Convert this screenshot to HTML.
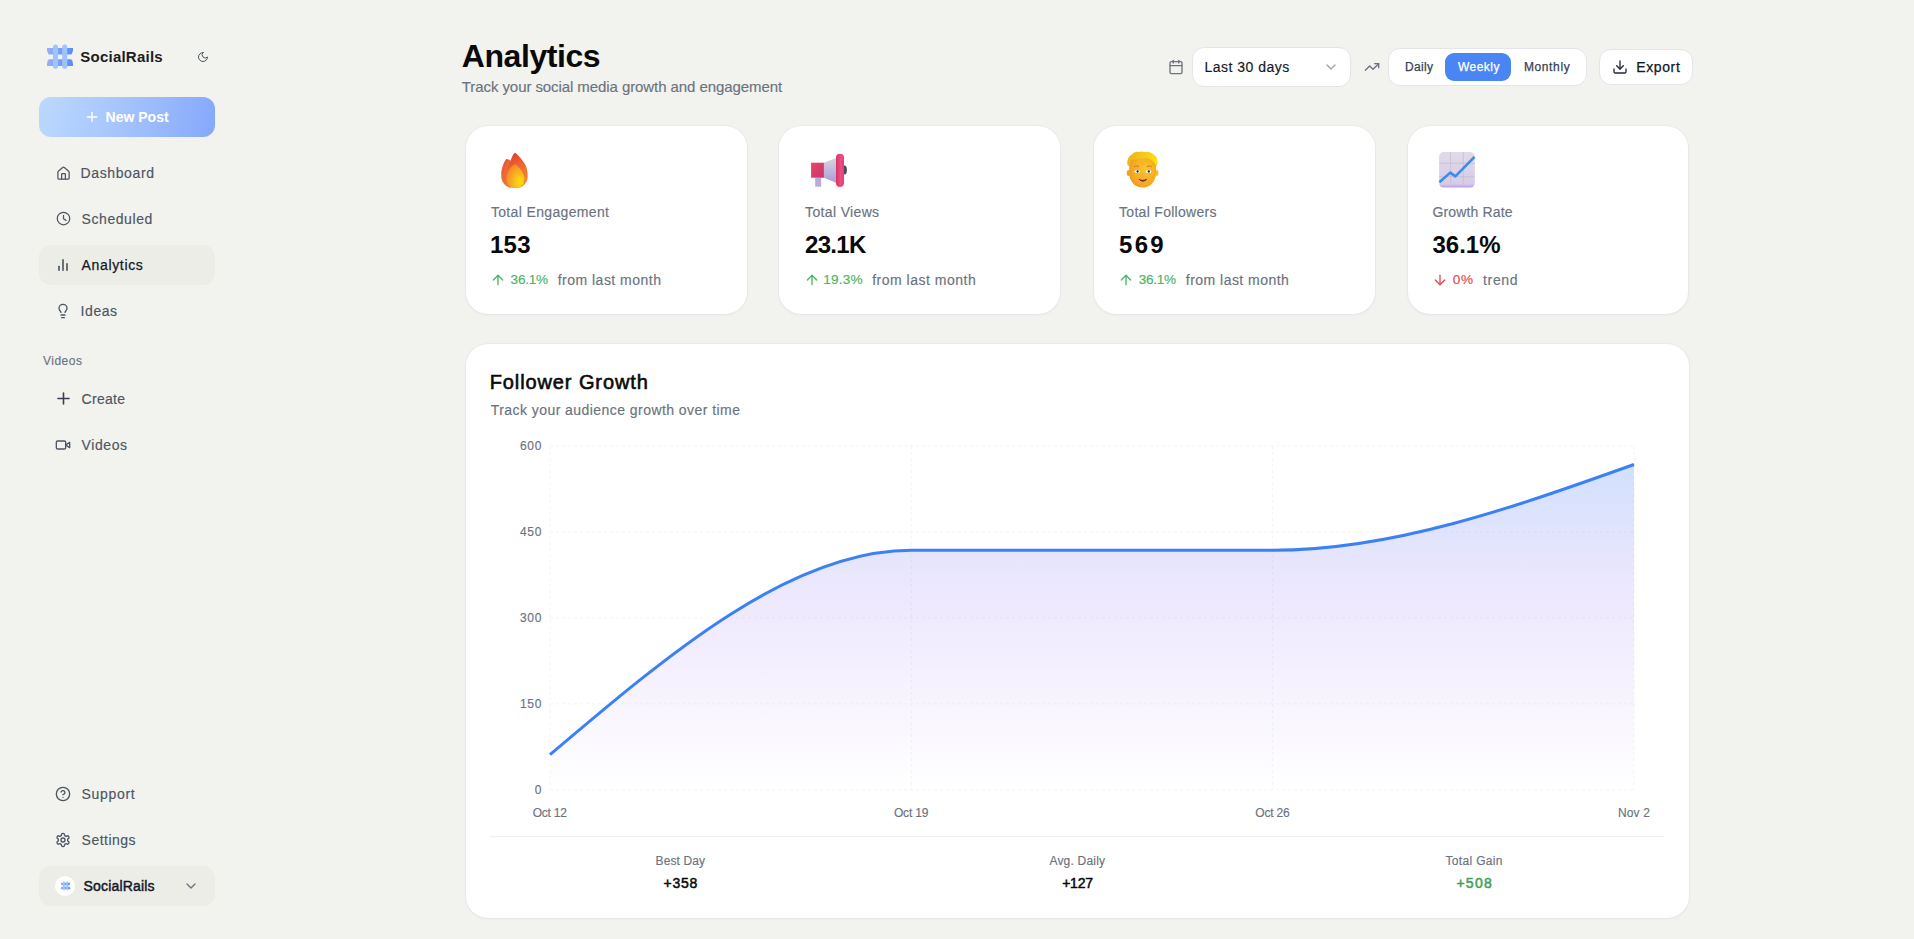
<!DOCTYPE html>
<html><head><meta charset="utf-8">
<style>
*{margin:0;padding:0;box-sizing:border-box}
html,body{width:1914px;height:939px;overflow:hidden}
body{background:#f2f2ee;position:relative;font-family:"Liberation Sans",sans-serif}
.t{position:absolute;white-space:nowrap;line-height:1}
.ic{position:absolute;fill:none;stroke:currentColor;stroke-width:2;stroke-linecap:round;stroke-linejoin:round}
.box{position:absolute}
.card{position:absolute;background:#fff;border-radius:22px;box-shadow:0 0 0 1px rgba(215,220,235,0.28),0 1px 3px rgba(60,70,110,0.05)}
.ctl{position:absolute;background:#fff;border:1px solid #e3e5ea;border-radius:12px}
</style></head>
<body>
<!-- ===== SIDEBAR ===== -->
<svg class="box" style="left:45px;top:43px" width="30" height="28" viewBox="0 0 30 28">
  <defs>
    <linearGradient id="lgb" x1="0" y1="0" x2="1" y2="0">
      <stop offset="0" stop-color="#98b0f4"/><stop offset="1" stop-color="#5a8cf7"/>
    </linearGradient>
  </defs>
  <path d="M2 4.9H28V7.2L27 10.5L26 11.6H4L3 10.5L2 7.2Z" fill="url(#lgb)"/>
  <path d="M2 22.9H28V20.6L27 17.3L26 16.2H4L3 17.3L2 20.6Z" fill="url(#lgb)"/>
  <rect x="8" y="1.6" width="5" height="24.2" rx="2.5" fill="#9dc4ff"/>
  <rect x="17.2" y="1.6" width="5" height="24.2" rx="2.5" fill="#9dc4ff"/>
</svg>
<svg class="ic" style="left:196.8px;top:51px;color:#4b5563" width="12" height="12" viewBox="0 0 24 24"><path d="M12 3a6 6 0 0 0 9 9 9 9 0 1 1-9-9Z"/></svg>

<div class="box" style="left:39px;top:97px;width:176px;height:40px;border-radius:12px;background:linear-gradient(100deg,#bbd9fe 0%,#a6c5fd 45%,#86a8fa 100%)"></div>
<svg class="ic" style="left:84px;top:109.3px;color:#fff" width="16" height="16" viewBox="0 0 24 24"><path d="M5 12h14"/><path d="M12 5v14"/></svg>

<div class="box" style="left:39px;top:245px;width:176px;height:40px;border-radius:12px;background:#ededE8"></div>

<svg class="ic" style="left:55.6px;top:165.6px;color:#4b5563" width="15" height="15" viewBox="0 0 24 24"><path d="M15 21v-8a1 1 0 0 0-1-1h-4a1 1 0 0 0-1 1v8"/><path d="M3 10a2 2 0 0 1 .709-1.528l7-5.999a2 2 0 0 1 2.582 0l7 5.999A2 2 0 0 1 21 10v9a2 2 0 0 1-2 2H5a2 2 0 0 1-2-2z"/></svg>
<svg class="ic" style="left:55.5px;top:211.4px;color:#4b5563" width="15" height="15" viewBox="0 0 24 24"><circle cx="12" cy="12" r="10"/><polyline points="12 7 12 12.5 16 15"/></svg>
<svg class="ic" style="left:55px;top:257px;color:#2b3340" width="16" height="16" viewBox="0 0 24 24"><line x1="18" x2="18" y1="20" y2="10"/><line x1="12" x2="12" y1="20" y2="4"/><line x1="6" x2="6" y1="20" y2="14"/></svg>
<svg class="ic" style="left:55px;top:303px;color:#4b5563" width="16" height="16" viewBox="0 0 24 24"><path d="M15 14c.2-1 .7-1.7 1.5-2.5 1-.9 1.5-2.2 1.5-3.5A6 6 0 0 0 6 8c0 1 .2 2.2 1.5 3.5.7.7 1.3 1.5 1.5 2.5"/><path d="M9 18h6"/><path d="M10 22h4"/></svg>
<svg class="ic" style="left:53.5px;top:389.3px;color:#374151" width="19" height="19" viewBox="0 0 24 24"><path d="M5 12h14"/><path d="M12 5v14"/></svg>
<svg class="ic" style="left:55px;top:437px;color:#4b5563" width="16" height="16" viewBox="0 0 24 24"><path d="m22 8-6 4 6 4V8Z"/><rect width="14" height="12" x="2" y="6" rx="2" ry="2"/></svg>
<svg class="ic" style="left:55px;top:786px;color:#4b5563" width="16" height="16" viewBox="0 0 24 24"><circle cx="12" cy="12" r="10"/><path d="M9.09 9a3 3 0 0 1 5.83 1c0 2-3 3-3 3"/><path d="M12 17h.01"/></svg>
<svg class="ic" style="left:55px;top:832px;color:#4b5563" width="16" height="16" viewBox="0 0 24 24"><path d="M12.22 2h-.44a2 2 0 0 0-2 2v.18a2 2 0 0 1-1 1.730l-.43.25a2 2 0 0 1-2 0l-.15-.08a2 2 0 0 0-2.730.73l-.22.38a2 2 0 0 0 .73 2.730l.15.1a2 2 0 0 1 1 1.720v.51a2 2 0 0 1-1 1.740l-.15.09a2 2 0 0 0-.73 2.730l.22.38a2 2 0 0 0 2.730.73l.15-.08a2 2 0 0 1 2 0l.43.25a2 2 0 0 1 1 1.730V20a2 2 0 0 0 2 2h.44a2 2 0 0 0 2-2v-.18a2 2 0 0 1 1-1.730l.43-.25a2 2 0 0 1 2 0l.15.08a2 2 0 0 0 2.730-.73l.22-.39a2 2 0 0 0-.73-2.730l-.15-.08a2 2 0 0 1-1-1.740v-.5a2 2 0 0 1 1-1.740l.15-.09a2 2 0 0 0 .73-2.730l-.22-.38a2 2 0 0 0-2.730-.73l-.15.08a2 2 0 0 1-2 0l-.43-.25a2 2 0 0 1-1-1.730V4a2 2 0 0 0-2-2z"/><circle cx="12" cy="12" r="3"/></svg>

<div class="box" style="left:39px;top:866px;width:176px;height:40px;border-radius:12px;background:#ededE8"></div>
<div class="box" style="left:55px;top:876px;width:20px;height:20px;border-radius:10px;background:#fff"></div>
<svg class="box" style="left:59.5px;top:881px" width="11" height="10" viewBox="0 0 30 28">
  <path d="M2 4.9H28V7.2L27 10.5L26 11.6H4L3 10.5L2 7.2Z" fill="url(#lgb)"/>
  <path d="M2 22.9H28V20.6L27 17.3L26 16.2H4L3 17.3L2 20.6Z" fill="url(#lgb)"/>
  <rect x="8" y="1.6" width="5" height="24.2" rx="2.5" fill="#9dc4ff"/>
  <rect x="17.2" y="1.6" width="5" height="24.2" rx="2.5" fill="#9dc4ff"/>
</svg>
<svg class="ic" style="left:183px;top:878px;color:#6b7280" width="16" height="16" viewBox="0 0 24 24"><path d="m6 9 6 6 6-6"/></svg>

<!-- ===== HEADER CONTROLS ===== -->
<svg class="ic" style="left:1168px;top:58.8px;color:#6b7280" width="16" height="16" viewBox="0 0 24 24"><rect width="18" height="18" x="3" y="4" rx="2" ry="2"/><line x1="16" x2="16" y1="2" y2="6"/><line x1="8" x2="8" y1="2" y2="6"/><line x1="3" x2="21" y1="10" y2="10"/></svg>
<div class="ctl" style="left:1192px;top:47px;width:159px;height:39.5px"></div>
<svg class="ic" style="left:1323px;top:59px;color:#9ca3af" width="16" height="16" viewBox="0 0 24 24"><path d="m6 9 6 6 6-6"/></svg>
<svg class="ic" style="left:1364px;top:58.8px;color:#6b7280" width="16" height="16" viewBox="0 0 24 24"><polyline points="22 7 13.5 15.5 8.5 10.5 2 17"/><polyline points="16 7 22 7 22 13"/></svg>
<div class="ctl" style="left:1388px;top:48px;width:198.5px;height:37.5px"></div>
<div class="box" style="left:1445px;top:53px;width:66px;height:28px;border-radius:9px;background:#4a85f4"></div>
<div class="ctl" style="left:1599px;top:49px;width:93.5px;height:35.5px"></div>
<svg class="ic" style="left:1611.8px;top:58.6px;color:#1f2937" width="16" height="16" viewBox="0 0 24 24"><path d="M21 15v4a2 2 0 0 1-2 2H5a2 2 0 0 1-2-2v-4"/><polyline points="7 10 12 15 17 10"/><line x1="12" x2="12" y1="15" y2="3"/></svg>

<!-- ===== STAT CARDS ===== -->
<div class="card" style="left:465.5px;top:125.6px;width:281.1px;height:188.3px"></div>
<div class="card" style="left:779px;top:125.6px;width:281.1px;height:188.3px"></div>
<div class="card" style="left:1093.6px;top:125.6px;width:281.1px;height:188.3px"></div>
<div class="card" style="left:1407.6px;top:125.6px;width:280.7px;height:188.3px"></div>

<!-- fire emoji -->
<svg class="box" style="left:494px;top:146px" width="40" height="48" viewBox="0 0 40 48">
  <defs>
    <linearGradient id="fo" x1="0.3" y1="0" x2="0.6" y2="1"><stop offset="0" stop-color="#e3392f"/><stop offset="0.4" stop-color="#ee6530"/><stop offset="1" stop-color="#f58e2b"/></linearGradient>
    <linearGradient id="fl" x1="0" y1="0" x2="0.3" y2="1"><stop offset="0" stop-color="#e5503a"/><stop offset="1" stop-color="#ef7a34"/></linearGradient>
    <radialGradient id="fy" cx="0.75" cy="0.75" r="0.8"><stop offset="0" stop-color="#ffe100"/><stop offset="0.4" stop-color="#fbbb1e"/><stop offset="1" stop-color="#f2872c"/></radialGradient>
  </defs>
  <path d="M12.3 13C13.2 12.6 14.6 13.3 15.5 15C13.5 18 12 23 12 29C12 35 14 39.5 18 42C12.5 41.5 8 37.5 7.3 31C6.8 24.5 9 17 12.3 13Z" fill="url(#fl)"/>
  <path d="M14.6 13.6C15.6 13.4 16.4 14.3 16.8 15.5C15 19 14 24 14.2 29.5C14.4 35 16.5 39.5 20 42C15 41.5 10.5 38 9.8 31.5C9.2 25 11.2 18 14.6 13.6Z" fill="#ea6a36"/>
  <path d="M21 6.6C24.5 9.5 29 14.5 31.7 19.4C33.3 23 33.8 27 33.7 30.7C33.5 36.5 29.5 42 22 42C16 42 12.2 37.5 12.2 31C12.2 24 14.5 18.5 16.4 15C17.6 11.5 19.2 8.5 21 6.6Z" fill="url(#fo)"/>
  <path d="M21 17.9C24 20 28.5 24.5 29.9 29.5C30.8 33 30.3 36.8 28.6 38.9C27 40.9 24.5 41.9 21.5 41.9C18 41.9 15 40.8 13.6 38.5C12.2 36 12 32 12.8 28.5C14 23.5 17.5 20 21 17.9Z" fill="url(#fy)"/>
</svg>
<!-- megaphone emoji -->
<svg class="box" style="left:790px;top:140px" width="80" height="60" viewBox="0 0 80 60">
  <defs>
    <linearGradient id="mr" x1="0" y1="0" x2="1" y2="1"><stop offset="0" stop-color="#ea4663"/><stop offset="1" stop-color="#c9336c"/></linearGradient>
    <linearGradient id="mc" x1="0" y1="0" x2="0" y2="1"><stop offset="0" stop-color="#d8d4de"/><stop offset="1" stop-color="#a99cd6"/></linearGradient>
    <linearGradient id="mb" x1="0" y1="0" x2="1" y2="0"><stop offset="0" stop-color="#d23464"/><stop offset="0.6" stop-color="#f04c82"/><stop offset="1" stop-color="#e0407a"/></linearGradient>
  </defs>
  <rect x="25.2" y="37.7" width="5.9" height="9" fill="#b8aadb"/>
  <path d="M33.9 22.7L46 17.9V42.8L33.9 37.7Z" fill="url(#mc)"/>
  <rect x="21.1" y="22.7" width="12.8" height="15" fill="url(#mr)"/>
  <ellipse cx="54.5" cy="30" rx="2.4" ry="4.5" fill="#4a4a5c"/>
  <rect x="46" y="13.7" width="8" height="33.3" rx="4" fill="url(#mb)"/>
</svg>
<!-- person emoji -->
<svg class="box" style="left:1110px;top:140px" width="60" height="60" viewBox="0 0 60 60">
  <defs>
    <radialGradient id="pf" cx="0.6" cy="0.45" r="0.7"><stop offset="0" stop-color="#f9c62c"/><stop offset="0.7" stop-color="#f4a81e"/><stop offset="1" stop-color="#ee8f30"/></radialGradient>
    <linearGradient id="ph" x1="0" y1="0.3" x2="1" y2="0.5"><stop offset="0" stop-color="#f1ae1c"/><stop offset="0.5" stop-color="#f6c81a"/><stop offset="1" stop-color="#fde40c"/></linearGradient>
  </defs>
  <ellipse cx="18.6" cy="33" rx="1.9" ry="3" fill="#f2a61e"/>
  <ellipse cx="46.6" cy="33" rx="1.9" ry="3" fill="#f6c02a"/>
  <path d="M19.2 24C19.2 17.5 25 14.5 32.6 14.5C40.2 14.5 46 17.5 46 24V33C46 41.5 40.2 47.6 32.6 47.6C25 47.6 19.2 41.5 19.2 33Z" fill="url(#pf)"/>
  <path d="M17.5 25C16.8 20 18.5 16 22 14.5C23.5 12.5 26 11.5 28.5 12C30 11.2 33 11.2 35 12C37 11.3 40 11.8 42 13.5C45.5 15 48 18.5 47.8 22.5C47.6 24 47.2 25 46.3 26.5C45 22 41.5 18.8 36.5 17.8C34.8 17.5 33.6 17.8 33.2 18.6C30 19.2 24 18.8 21.2 19.8C20.2 21.5 19.6 23.5 19.2 26.5Z" fill="url(#ph)"/>
  <path d="M24.4 26.6C25.5 25.7 27.5 25.7 28.6 26.5M37.2 26.5C38.3 25.7 40.3 25.7 41.4 26.6" stroke="#c8703c" stroke-width="1" fill="none" stroke-linecap="round"/>
  <ellipse cx="27.2" cy="31.4" rx="2.9" ry="1.5" fill="#fff"/>
  <ellipse cx="38.5" cy="31.4" rx="2.9" ry="1.5" fill="#fff"/>
  <circle cx="27.6" cy="31.5" r="1.15" fill="#2a1e2a"/>
  <circle cx="38.8" cy="31.5" r="1.15" fill="#2a1e2a"/>
  <path d="M33 33C32.6 35 32.3 36 32.8 37" stroke="#e8961c" stroke-width="0.8" fill="none" opacity="0.6"/>
  <path d="M29.2 39.2C31 40.7 34.5 40.7 36.6 39.2C35.2 41.8 30.6 41.8 29.2 39.2Z" fill="#7a1f5c" stroke="#7a1f5c" stroke-width="0.8"/>
</svg>
<!-- chart emoji -->
<svg class="box" style="left:1425px;top:140px" width="60" height="60" viewBox="0 0 60 60">
  <defs>
    <linearGradient id="cg" x1="0" y1="0" x2="0" y2="1"><stop offset="0" stop-color="#e0dbe8"/><stop offset="0.9" stop-color="#d6cce8"/><stop offset="1" stop-color="#b99ae0"/></linearGradient>
  </defs>
  <rect x="14.1" y="12.1" width="35.7" height="35.5" rx="4.5" fill="url(#cg)"/>
  <path d="M25.6 12.3V47.4M38.3 12.3V47.4M14.2 23.3H49.7M14.2 36.7H49.7" stroke="#c5bdd0" stroke-width="0.8"/>
  <path d="M14.4 42.2L25.2 32.6L30.4 36.4L49.5 16.9" stroke="#3b8ee8" stroke-width="2.6" fill="none" stroke-linejoin="round"/>
</svg>

<!-- trend arrows -->
<svg class="ic" style="left:490px;top:272px;color:#4bb567" width="16" height="16" viewBox="0 0 24 24"><path d="m5 12 7-7 7 7"/><path d="M12 19V5"/></svg>
<svg class="ic" style="left:804px;top:272px;color:#4bb567" width="16" height="16" viewBox="0 0 24 24"><path d="m5 12 7-7 7 7"/><path d="M12 19V5"/></svg>
<svg class="ic" style="left:1117.9px;top:272px;color:#4bb567" width="16" height="16" viewBox="0 0 24 24"><path d="m5 12 7-7 7 7"/><path d="M12 19V5"/></svg>
<svg class="ic" style="left:1431.9px;top:272px;color:#e5484d" width="16" height="16" viewBox="0 0 24 24"><path d="M12 5v14"/><path d="m19 12-7 7-7-7"/></svg>

<!-- ===== CHART CARD ===== -->
<div class="card" style="left:465.5px;top:344px;width:1223px;height:574px"></div>
<svg class="box" style="left:0;top:0" width="1914" height="939">
  <defs>
    <linearGradient id="ag" x1="0" y1="0" x2="0" y2="1">
      <stop offset="0" stop-color="#3b82f6" stop-opacity="0.24"/>
      <stop offset="0.45" stop-color="#8b5cf6" stop-opacity="0.135"/>
      <stop offset="1" stop-color="#8b5cf6" stop-opacity="0"/>
    </linearGradient>
  </defs>
  <g stroke="#f4f4f6" stroke-width="1" stroke-dasharray="3 3" fill="none">
    <path d="M550 446.00H1634M550 531.95H1634M550 617.90H1634M550 703.85H1634M550 789.80H1634"/>
    <path d="M550 446V789.8M911.33 446V789.8M1272.67 446V789.8M1634 446V789.8"/>
  </g>
  <path d="M550,754.70C670.44,652.50,790.89,550.30,911.33,550.30C1031.78,550.30,1152.22,550.30,1272.67,550.30C1393.11,550.30,1513.56,507.40,1634,464.50L1634,789.8L550,789.8Z" fill="url(#ag)"/>
  <path d="M550,754.70C670.44,652.50,790.89,550.30,911.33,550.30C1031.78,550.30,1152.22,550.30,1272.67,550.30C1393.11,550.30,1513.56,507.40,1634,464.50" fill="none" stroke="#3b80f5" stroke-width="3"/>
  <line x1="490" y1="836.6" x2="1664" y2="836.6" stroke="#efefef" stroke-width="1"/>
</svg>

<div class="t" style="left:80.30px;top:49.10px;font-size:15px;color:#1c1c1c;font-weight:bold;letter-spacing:0.230px;">SocialRails</div>
<div class="t" style="left:105.60px;top:110.15px;font-size:14px;color:#ffffff;font-weight:bold;">New Post</div>
<div class="t" style="left:80.60px;top:165.95px;font-size:14px;color:#4b5563;letter-spacing:0.612px;-webkit-text-stroke:0.15px #4b5563;">Dashboard</div>
<div class="t" style="left:81.60px;top:211.95px;font-size:14px;color:#4b5563;letter-spacing:0.565px;-webkit-text-stroke:0.15px #4b5563;">Scheduled</div>
<div class="t" style="left:80.60px;top:303.95px;font-size:14px;color:#4b5563;letter-spacing:0.563px;-webkit-text-stroke:0.15px #4b5563;">Ideas</div>
<div class="t" style="left:81.60px;top:391.95px;font-size:14px;color:#4b5563;letter-spacing:0.293px;-webkit-text-stroke:0.15px #4b5563;">Create</div>
<div class="t" style="left:81.60px;top:437.95px;font-size:14px;color:#4b5563;letter-spacing:0.569px;-webkit-text-stroke:0.15px #4b5563;">Videos</div>
<div class="t" style="left:81.60px;top:786.95px;font-size:14px;color:#4b5563;letter-spacing:0.676px;-webkit-text-stroke:0.15px #4b5563;">Support</div>
<div class="t" style="left:81.60px;top:832.95px;font-size:14px;color:#4b5563;letter-spacing:0.488px;-webkit-text-stroke:0.15px #4b5563;">Settings</div>
<div class="t" style="left:81.60px;top:257.95px;font-size:14px;color:#111827;letter-spacing:0.647px;-webkit-text-stroke:0.25px #111827;">Analytics</div>
<div class="t" style="left:43.10px;top:355.14px;font-size:12px;color:#6b7280;letter-spacing:0.465px;-webkit-text-stroke:0.15px #6b7280;">Videos</div>
<div class="t" style="left:83.50px;top:879.25px;font-size:14px;color:#111827;letter-spacing:0.185px;-webkit-text-stroke:0.45px #111827;">SocialRails</div>
<div class="t" style="left:461.80px;top:39.61px;font-size:32px;color:#0a0a0a;font-weight:bold;letter-spacing:-0.436px;">Analytics</div>
<div class="t" style="left:461.80px;top:79.20px;font-size:15px;color:#6b7280;letter-spacing:-0.078px;-webkit-text-stroke:0.15px #6b7280;">Track your social media growth and engagement</div>
<div class="t" style="left:1204.40px;top:60.35px;font-size:14px;color:#111827;letter-spacing:0.492px;-webkit-text-stroke:0.15px #111827;">Last 30 days</div>
<div class="t" style="left:1405.00px;top:60.64px;font-size:12px;color:#374151;letter-spacing:0.307px;-webkit-text-stroke:0.25px #374151;">Daily</div>
<div class="t" style="left:1457.90px;top:60.64px;font-size:12px;color:#ffffff;letter-spacing:0.495px;-webkit-text-stroke:0.25px #ffffff;">Weekly</div>
<div class="t" style="left:1523.90px;top:60.64px;font-size:12px;color:#374151;letter-spacing:0.630px;-webkit-text-stroke:0.25px #374151;">Monthly</div>
<div class="t" style="left:1636.20px;top:60.05px;font-size:14px;color:#111827;letter-spacing:0.626px;-webkit-text-stroke:0.25px #111827;">Export</div>
<div class="t" style="left:490.90px;top:204.95px;font-size:14px;color:#6b7280;letter-spacing:0.349px;-webkit-text-stroke:0.15px #6b7280;">Total Engagement</div>
<div class="t" style="left:489.90px;top:233.48px;font-size:24px;color:#0a0a0a;font-weight:bold;letter-spacing:0.352px;">153</div>
<div class="t" style="left:510.60px;top:273.19px;font-size:13.6px;color:#4bb567;letter-spacing:-0.239px;-webkit-text-stroke:0.15px #4bb567;">36.1%</div>
<div class="t" style="left:557.70px;top:272.85px;font-size:14px;color:#6b7280;letter-spacing:0.486px;-webkit-text-stroke:0.15px #6b7280;">from last month</div>
<div class="t" style="left:805.10px;top:204.95px;font-size:14px;color:#6b7280;letter-spacing:0.345px;-webkit-text-stroke:0.15px #6b7280;">Total Views</div>
<div class="t" style="left:805.10px;top:233.48px;font-size:24px;color:#0a0a0a;font-weight:bold;letter-spacing:-0.728px;">23.1K</div>
<div class="t" style="left:823.30px;top:273.19px;font-size:13.6px;color:#4bb567;letter-spacing:0.211px;-webkit-text-stroke:0.15px #4bb567;">19.3%</div>
<div class="t" style="left:872.20px;top:272.85px;font-size:14px;color:#6b7280;letter-spacing:0.508px;-webkit-text-stroke:0.15px #6b7280;">from last month</div>
<div class="t" style="left:1119.05px;top:204.95px;font-size:14px;color:#6b7280;letter-spacing:0.295px;-webkit-text-stroke:0.15px #6b7280;">Total Followers</div>
<div class="t" style="left:1119.05px;top:233.48px;font-size:24px;color:#0a0a0a;font-weight:bold;letter-spacing:2.252px;">569</div>
<div class="t" style="left:1138.80px;top:273.19px;font-size:13.6px;color:#4bb567;letter-spacing:-0.314px;-webkit-text-stroke:0.15px #4bb567;">36.1%</div>
<div class="t" style="left:1185.80px;top:272.85px;font-size:14px;color:#6b7280;letter-spacing:0.472px;-webkit-text-stroke:0.15px #6b7280;">from last month</div>
<div class="t" style="left:1432.45px;top:204.95px;font-size:14px;color:#6b7280;letter-spacing:0.160px;-webkit-text-stroke:0.15px #6b7280;">Growth Rate</div>
<div class="t" style="left:1432.45px;top:233.48px;font-size:24px;color:#0a0a0a;font-weight:bold;letter-spacing:0.022px;">36.1%</div>
<div class="t" style="left:1452.70px;top:273.19px;font-size:13.6px;color:#e5484d;letter-spacing:0.840px;-webkit-text-stroke:0.15px #e5484d;">0%</div>
<div class="t" style="left:1483.00px;top:272.85px;font-size:14px;color:#6b7280;letter-spacing:0.669px;-webkit-text-stroke:0.15px #6b7280;">trend</div>
<div class="t" style="left:489.70px;top:372.27px;font-size:20px;color:#0a0a0a;letter-spacing:0.895px;-webkit-text-stroke:0.6px #0a0a0a;">Follower Growth</div>
<div class="t" style="left:490.70px;top:402.75px;font-size:14px;color:#6b7280;letter-spacing:0.446px;-webkit-text-stroke:0.15px #6b7280;">Track your audience growth over time</div>
<div class="t" style="left:519.90px;top:440.04px;font-size:12px;color:#6b7280;letter-spacing:0.726px;-webkit-text-stroke:0.15px #6b7280;">600</div>
<div class="t" style="left:519.90px;top:525.99px;font-size:12px;color:#6b7280;letter-spacing:0.726px;-webkit-text-stroke:0.15px #6b7280;">450</div>
<div class="t" style="left:519.90px;top:611.94px;font-size:12px;color:#6b7280;letter-spacing:0.726px;-webkit-text-stroke:0.15px #6b7280;">300</div>
<div class="t" style="left:519.90px;top:697.89px;font-size:12px;color:#6b7280;letter-spacing:0.726px;-webkit-text-stroke:0.15px #6b7280;">150</div>
<div class="t" style="left:534.70px;top:783.84px;font-size:12px;color:#6b7280;-webkit-text-stroke:0.15px #6b7280;">0</div>
<div class="t" style="left:532.70px;top:806.74px;font-size:12px;color:#6b7280;letter-spacing:-0.215px;-webkit-text-stroke:0.15px #6b7280;">Oct 12</div>
<div class="t" style="left:893.98px;top:806.74px;font-size:12px;color:#6b7280;letter-spacing:-0.195px;-webkit-text-stroke:0.15px #6b7280;">Oct 19</div>
<div class="t" style="left:1255.32px;top:806.74px;font-size:12px;color:#6b7280;letter-spacing:-0.195px;-webkit-text-stroke:0.15px #6b7280;">Oct 26</div>
<div class="t" style="left:1618.00px;top:806.74px;font-size:12px;color:#6b7280;letter-spacing:0.132px;-webkit-text-stroke:0.15px #6b7280;">Nov 2</div>
<div class="t" style="left:655.60px;top:854.54px;font-size:12px;color:#6b7280;letter-spacing:0.116px;-webkit-text-stroke:0.15px #6b7280;">Best Day</div>
<div class="t" style="left:663.60px;top:875.85px;font-size:14px;color:#0a0a0a;letter-spacing:0.717px;-webkit-text-stroke:0.5px #0a0a0a;">+358</div>
<div class="t" style="left:1049.40px;top:854.54px;font-size:12px;color:#6b7280;letter-spacing:0.200px;-webkit-text-stroke:0.15px #6b7280;">Avg. Daily</div>
<div class="t" style="left:1062.15px;top:875.85px;font-size:14px;color:#0a0a0a;letter-spacing:-0.216px;-webkit-text-stroke:0.5px #0a0a0a;">+127</div>
<div class="t" style="left:1445.55px;top:854.54px;font-size:12px;color:#6b7280;letter-spacing:0.327px;-webkit-text-stroke:0.15px #6b7280;">Total Gain</div>
<div class="t" style="left:1456.45px;top:875.85px;font-size:14px;color:#3f9f55;letter-spacing:1.251px;-webkit-text-stroke:0.5px #3f9f55;">+508</div>
</body></html>
